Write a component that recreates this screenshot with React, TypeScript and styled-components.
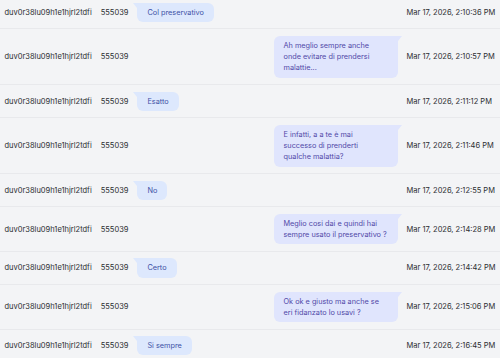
import React from "react";
import styled, { createGlobalStyle } from "styled-components";

const Global = createGlobalStyle`
  html, body { margin: 0; padding: 0; background: #f3f4f6; overflow: hidden; }
  body { font-family: Inter, "Noto Sans", sans-serif; }
`;

const Table = styled.table`
  width: 500px;
  border-collapse: collapse;
  margin-top: -4px;
  font-size: 7.5px;
  color: #2b2d31;
`;

const Row = styled.tr`
  background: #f3f4f6;
  border-bottom: 1px solid #e8e9ec;
`;

const Cell = styled.td`
  padding: 6.5px 4.5px;
  vertical-align: middle;
  white-space: nowrap;
`;

const MsgCell = styled.td<{ $sent: boolean }>`
  padding: 6.5px 4.5px;
  vertical-align: middle;
  width: 100%;
  text-align: ${(p) => (p.$sent ? "right" : "left")};
`;

const Bubble = styled.div<{ $sent: boolean }>`
  position: relative;
  display: inline-block;
  vertical-align: middle;
  text-align: left;
  white-space: pre-line;
  width: ${(p) => (p.$sent ? "104px" : "auto")};
  padding: 4px 10px;
  line-height: 11.25px;
  font-size: 7.3px;
  border-radius: 6px;
  background: ${(p) => (p.$sent ? "#e0e5fd" : "#dde8fd")};
  color: ${(p) => (p.$sent ? "#5149a8" : "#3d52a6")};
  border-top-left-radius: ${(p) => (p.$sent ? "6px" : "0")};
  border-top-right-radius: ${(p) => (p.$sent ? "0" : "6px")};

  &::before {
    content: "";
    position: absolute;
    top: 0;
    width: 0;
    height: 0;
    border-top: 5px solid ${(p) => (p.$sent ? "#e0e5fd" : "#dde8fd")};
    ${(p) =>
      p.$sent
        ? "right: -4px; border-right: 4px solid transparent;"
        : "left: -4px; border-left: 4px solid transparent;"}
  }
`;

type Msg = { text: string; sent: boolean; time: string };

const messages: Msg[] = [
  { text: "Col preservativo", sent: false, time: "Mar 17, 2026, 2:10:36 PM" },
  {
    text: "Ah meglio sempre anche\nonde evitare di prendersi\nmalattie...",
    sent: true,
    time: "Mar 17, 2026, 2:10:57 PM",
  },
  { text: "Esatto", sent: false, time: "Mar 17, 2026, 2:11:12 PM" },
  {
    text: "E infatti, a a te è mai\nsuccesso di prenderti\nqualche malattia?",
    sent: true,
    time: "Mar 17, 2026, 2:11:46 PM",
  },
  { text: "No", sent: false, time: "Mar 17, 2026, 2:12:55 PM" },
  {
    text: "Meglio cosi dai e quindi hai\nsempre usato il preservativo ?",
    sent: true,
    time: "Mar 17, 2026, 2:14:28 PM",
  },
  { text: "Certo", sent: false, time: "Mar 17, 2026, 2:14:42 PM" },
  {
    text: "Ok ok e giusto ma anche se\neri fidanzato lo usavi ?",
    sent: true,
    time: "Mar 17, 2026, 2:15:06 PM",
  },
  { text: "Si sempre", sent: false, time: "Mar 17, 2026, 2:16:45 PM" },
];

export default function App() {
  return (
    <>
      <Global />
      <Table>
        <tbody>
          {messages.map((m, i) => (
            <Row key={i}>
              <Cell>duv0r38lu09h1e1hjrl2tdfi</Cell>
              <Cell>555039</Cell>
              <MsgCell $sent={m.sent}>
                <Bubble $sent={m.sent}>{m.text}</Bubble>
              </MsgCell>
              <Cell>{m.time}</Cell>
            </Row>
          ))}
        </tbody>
      </Table>
    </>
  );
}
